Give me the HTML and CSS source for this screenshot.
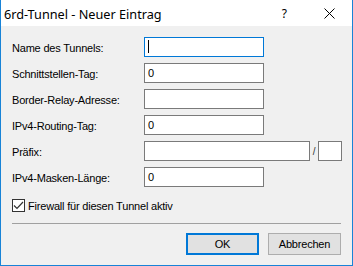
FILE: index.html
```html
<!DOCTYPE html>
<html lang="de">
<head>
<meta charset="utf-8">
<title>6rd-Tunnel - Neuer Eintrag</title>
<link rel="stylesheet" href="styles.css">
</head>
<body>
<div class="window">
  <div class="titlebar">
    <span class="title">6rd-Tunnel - Neuer Eintrag</span>
    <span class="help">?</span>
    <svg class="close" width="11" height="11" viewBox="0 0 11 11"><path d="M0.5 0.5 L10.5 10.5 M10.5 0.5 L0.5 10.5" stroke="#000" stroke-width="1" fill="none"/></svg>
  </div>
  <div class="content">
    <div class="form">
      <label class="lbl">Name des Tunnels:</label>
      <div class="field focused"><span class="caret"></span></div>
      <label class="lbl">Schnittstellen-Tag:</label>
      <div class="field">0</div>
      <label class="lbl">Border-Relay-Adresse:</label>
      <div class="field"></div>
      <label class="lbl">IPv4-Routing-Tag:</label>
      <div class="field">0</div>
      <label class="lbl">Präfix:</label>
      <div class="prefix">
        <div class="field wide"></div>
        <span class="slash">/</span>
        <div class="field small"></div>
      </div>
      <label class="lbl">IPv4-Masken-Länge:</label>
      <div class="field">0</div>
    </div>
    <div class="check">
      <span class="box"><svg width="11" height="11" viewBox="0 0 11 11"><path d="M1 5.5 L4 8.5 L10 2" stroke="#333" stroke-width="1.2" fill="none"/></svg></span>
      <span>Firewall für diesen Tunnel aktiv</span>
    </div>
    <div class="sep"></div>
    <div class="buttons">
      <button class="btn default">OK</button>
      <button class="btn">Abbrechen</button>
    </div>
  </div>
</div>
</body>
</html>
```
FILE: styles.css
```css
html, body {
  margin: 0;
  padding: 0;
  background: #ffffff;
}
.window {
  width: 353px;
  height: 266px;
  box-sizing: border-box;
  border: 1px solid #1883d7;
  border-top: none;
  display: flex;
  flex-direction: column;
  font-family: "Liberation Sans", Arial, sans-serif;
  font-size: 11px;
  letter-spacing: -0.2px;
  color: #000;
}
.titlebar {
  height: 26px;
  background: #fff;
  display: flex;
  align-items: center;
  padding-left: 3px;
  flex-shrink: 0;
  letter-spacing: 0;
}
.title {
  font-family: "Noto Sans", "Open Sans", sans-serif;
  font-size: 12.7px;
  flex: 1;
  padding-top: 1px;
}
.help {
  font-family: "Noto Sans", sans-serif;
  font-size: 12px;
  margin-right: 37px;
}
.close {
  margin-right: 17px;
}
.content {
  flex: 1;
  background: #f0f0f0;
  padding: 11px 11px 0 11px;
  display: flex;
  flex-direction: column;
}
.form {
  display: grid;
  grid-template-columns: 132px auto;
  row-gap: 6px;
  align-items: center;
}
.lbl {
  padding-top: 1px;
}
.field {
  width: 120px;
  height: 20px;
  box-sizing: border-box;
  border: 1px solid #7a7a7a;
  background: #fff;
  padding: 3px 0 0 3px;
  line-height: 13px;
}
.field.focused {
  border-color: #0078d7;
}
.caret {
  display: block;
  width: 1px;
  height: 13px;
  margin-top: -1px;
  background: #000;
}
.prefix {
  display: flex;
  align-items: center;
}
.field.wide {
  width: 166px;
}
.field.small {
  width: 24px;
}
.slash {
  width: 8px;
  text-align: center;
  font-size: 10px;
  color: #333;
}
.check {
  display: flex;
  align-items: center;
  margin-top: 12px;
  height: 13px;
}
.box {
  width: 13px;
  height: 13px;
  box-sizing: border-box;
  border: 1px solid #333;
  background: #fff;
  display: flex;
  margin-right: 3px;
}
.sep {
  margin-top: 11px;
  height: 1px;
  background: #a0a0a0;
}
.buttons {
  display: flex;
  justify-content: flex-end;
  gap: 9px;
  margin-top: 9px;
}
.btn {
  width: 73px;
  height: 22px;
  box-sizing: border-box;
  border: 1px solid #adadad;
  background: #e1e1e1;
  font-family: "Liberation Sans", Arial, sans-serif;
  font-size: 11px;
  letter-spacing: -0.2px;
  color: #000;
  padding: 0;
  margin: 0;
}
.btn.default {
  border: 2px solid #0078d7;
}
```
